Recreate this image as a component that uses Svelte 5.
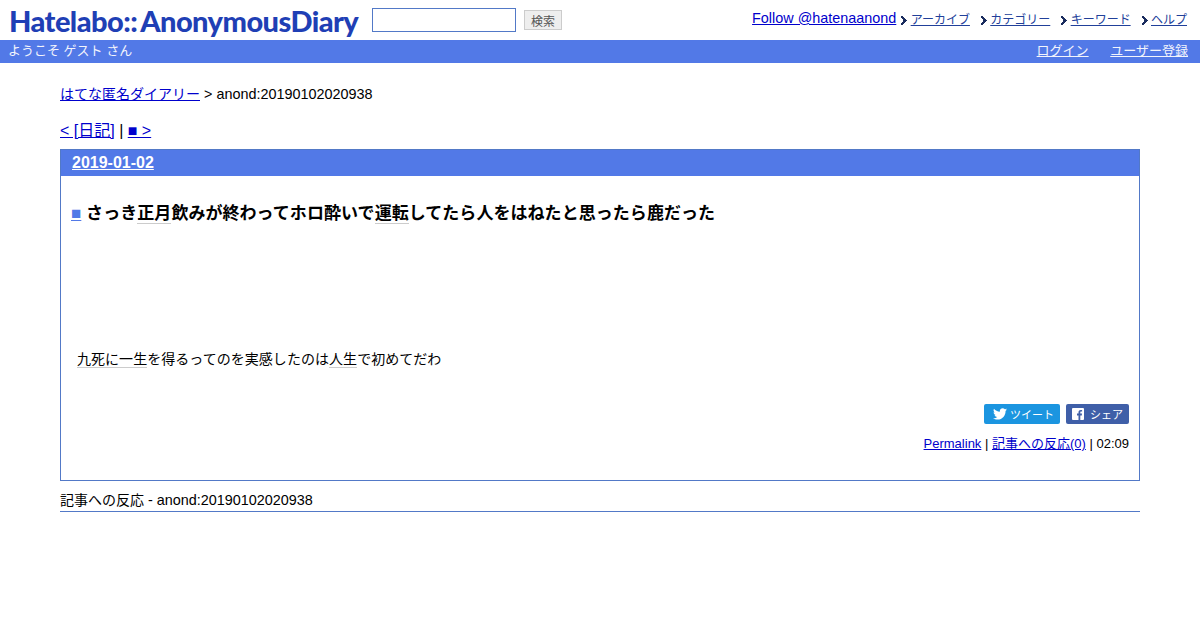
<script lang="ts">
	const menu = ['アーカイブ', 'カテゴリー', 'キーワード', 'ヘルプ']
</script>

<header class="top">
	<div class="brand">
		<span class="logo">Hatelabo::<span class="logo-tail">AnonymousDiary</span></span>
		<input class="search" type="text" />
		<button class="search-btn">検索</button>
	</div>
	<nav class="menu">
		<a class="follow" href="#top">Follow @hatenaanond</a>
		{#each menu as item}
			<span class="menu-item">
				<svg class="arrow" width="6" height="9" viewBox="0 0 6 9">
					<path d="M0 0h2v1h1v1h1v1h1v1h1v1h-1v1h-1v1h-1v1h-1v1h-2v-2h1v-1h1v-3h-1v-1h-1z" fill="#1a2c5e" />
				</svg>
				<a href="#top">{item}</a>
			</span>
		{/each}
	</nav>
</header>

<div class="userbar">
	<span>ようこそ ゲスト さん</span>
	<span class="user-links">
		<a href="#top">ログイン</a>
		<a href="#top">ユーザー登録</a>
	</span>
</div>

<main class="body">
	<div class="crumb"><a class="cjk" href="#top">はてな匿名ダイアリー</a> &gt; anond:20190102020938</div>
	<div class="pager"><a href="#top">&lt; [日記]</a> | <a href="#top">■ &gt;</a></div>

	<section class="day">
		<h2 class="date"><a href="#top">2019-01-02</a></h2>
		<div class="section">
			<h3 class="title"><a class="sq" href="#top">■</a> <span>さっき<span class="kw">正月</span>飲みが終わってホロ酔いで<span class="kw">運転</span>してたら人をはねたと思ったら鹿だった</span></h3>
			<p class="text"><span class="kw">九死に一生</span>を得るってのを実感したのは<span class="kw">人生</span>で初めてだわ</p>
			<div class="share">
				<span class="btn tw">
					<svg width="14" height="12" viewBox="0 0 24 20"><path fill="#fff" d="M24 2.400c-.9.4-1.800.7-2.800.8 1-.6 1.800-1.600 2.200-2.700-1 .6-2 1-3.100 1.200C19.300.7 18 0 16.600 0c-2.700 0-4.900 2.200-4.900 4.900 0 .4 0 .8.100 1.100C7.700 5.800 4.100 3.900 1.700.9c-.4.700-.7 1.600-.7 2.500 0 1.700.9 3.200 2.200 4.100-.8 0-1.600-.2-2.200-.6v.1c0 2.400 1.700 4.400 3.900 4.800-.4.100-.8.200-1.300.2-.3 0-.6 0-.9-.1.600 2 2.400 3.400 4.600 3.400-1.700 1.300-3.800 2.100-6.100 2.100-.4 0-.8 0-1.200-.1C2.200 18.700 4.800 19.500 7.500 19.500c9.100 0 14-7.500 14-14v-.6c1-.7 1.800-1.600 2.500-2.500z"/></svg>
					<span>ツイート</span>
				</span>
				<span class="btn fb">
					<svg width="12" height="12" viewBox="0 0 12 12"><rect width="12" height="12" rx="1" fill="#fff"/><path fill="#3f5fa8" d="M8.300 12V7.400h1.500l.2-1.800H8.300V4.500c0-.5.200-.9.900-.9h.9V2c-.2 0-.7-.1-1.300-.1-1.300 0-2.300.8-2.300 2.300v1.400H5v1.800h1.500V12z"/></svg>
					<span>シェア</span>
				</span>
			</div>
			<div class="foot"><a href="#top">Permalink</a> | <a href="#top">記事への反応(0)</a> | 02:09</div>
		</div>
	</section>

	<div class="refs"><span class="cjk">記事への反応</span> - anond:20190102020938</div>
</main>

<style>
	:global(body) {
		margin: 0;
		background: #fff;
		color: #000;
		font-family: "Liberation Sans", "Noto Sans CJK JP", sans-serif;
	}
	.top {
		display: flex;
		justify-content: space-between;
		height: 40px;
		padding: 0 13px 0 9px;
	}
	.brand {
		display: flex;
		align-items: center;
	}
	.logo {
		width: 350px;
		margin-right: 13px;
		font-family: "Lato", sans-serif;
		font-size: 29px;
		font-weight: 900;
		letter-spacing: -0.55px;
		color: #1f3fb5;
		white-space: nowrap;
	}
	.logo-tail {
		margin-left: 3px;
	}
	.search {
		box-sizing: border-box;
		width: 144px;
		height: 24px;
		margin: 0 8px 0 0;
		padding: 0;
		border: 1px solid #5279c7;
		background: #fff;
	}
	.search-btn {
		box-sizing: border-box;
		width: 38px;
		height: 20px;
		padding: 0;
		border: 1px solid #ccc;
		background: #eee;
		color: #555;
		font-family: inherit;
		font-size: 12px;
	}
	.menu {
		display: flex;
		align-items: flex-start;
		padding-top: 10px;
		font-size: 12px;
	}
	.follow {
		font-size: 14.4px;
		line-height: 16px;
		color: #00c;
	}
	.menu-item {
		margin-left: 11px;
		margin-top: 2px;
		line-height: 16px;
		white-space: nowrap;
	}
	.follow + .menu-item {
		margin-left: 5px;
	}
	.menu-item a {
		color: #21409a;
	}
	.arrow {
		vertical-align: -1px;
	}
	.userbar {
		display: flex;
		justify-content: space-between;
		height: 23px;
		padding: 0 12px 0 8px;
		background: #5279e7;
		color: #f2f4fc;
		font-size: 13px;
		line-height: 22px;
	}
	.userbar a {
		color: #f2f4fc;
	}
	.user-links a {
		margin-left: 18px;
	}
	.body {
		padding: 22px 60px 0;
	}
	.crumb {
		font-size: 14.4px;
		line-height: 18px;
	}
	.cjk {
		font-size: 14px;
	}
	.crumb a, .pager a, .foot a {
		color: #00c;
	}
	.pager {
		margin-top: 18px;
		font-size: 16px;
		line-height: 20px;
	}
	.day {
		box-sizing: border-box;
		height: 332px;
		margin-top: 8px;
		border: 1px solid #5279c7;
	}
	.date {
		height: 26px;
		margin: 0;
		padding: 0 11px;
		background: #5279e7;
		font-size: 16px;
		line-height: 26px;
	}
	.date a {
		color: #fff;
	}
	.section {
		padding: 0 10px;
	}
	.title {
		margin: 25px 0 0;
		font-size: 17px;
		letter-spacing: 0.05px;
		line-height: 25px;
	}
	.sq {
		color: #5279e7;
		font-weight: 400;
	}
	.kw {
		border-bottom: 1px solid #ccc;
	}
	.text {
		margin: 123px 0 0 6px;
		font-size: 14px;
		letter-spacing: 0.04px;
		line-height: 20px;
	}
	.share {
		display: flex;
		justify-content: flex-end;
		gap: 6px;
		margin-top: 35px;
	}
	.btn {
		display: flex;
		align-items: center;
		height: 20px;
		border-radius: 2px;
		color: #fff;
		font-size: 11px;
	}
	.tw {
		gap: 3px;
		padding: 0 6px 0 9px;
		background: #1b95e0;
	}
	.fb {
		gap: 6px;
		padding: 0 6px;
		background: #3f5fa8;
	}
	.foot {
		margin-top: 11px;
		text-align: right;
		font-size: 13px;
		line-height: 18px;
	}
	.refs {
		margin-top: 9px;
		padding-bottom: 1px;
		border-bottom: 1px solid #5279c7;
		font-size: 14.4px;
		line-height: 20px;
	}
</style>
